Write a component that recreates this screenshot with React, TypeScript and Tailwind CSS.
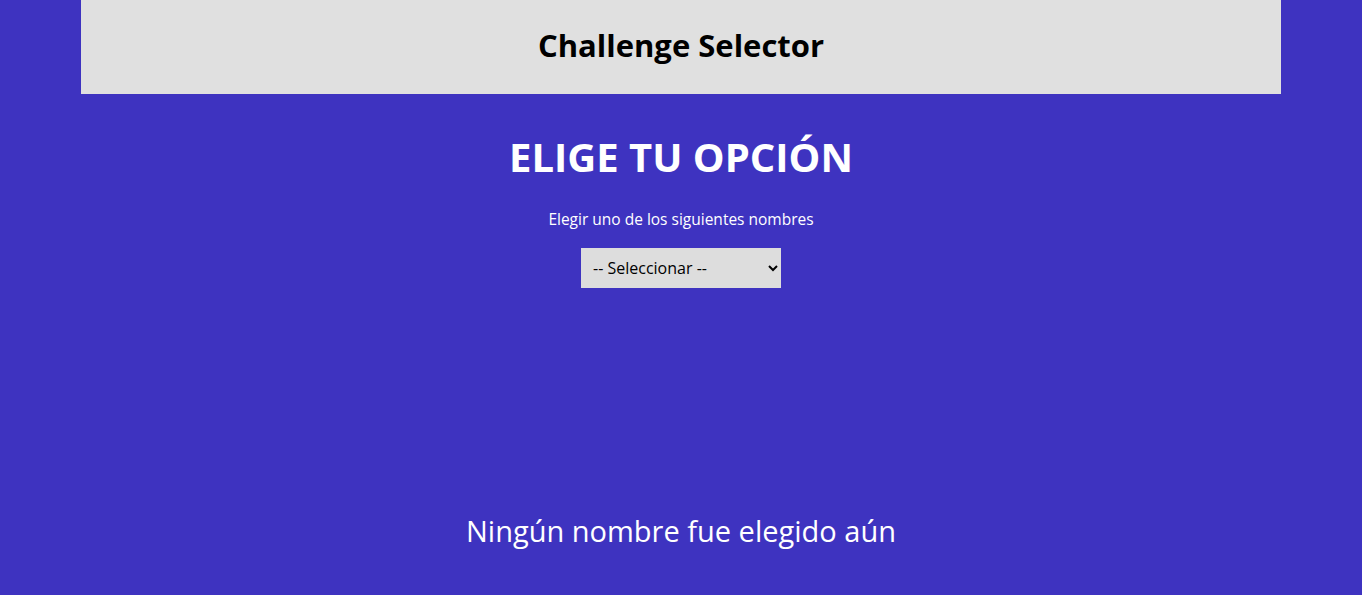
export default function App() {
    return (
        <div className="min-h-[595px] bg-[#3e33c0] font-['Open_Sans',sans-serif]">
            <header className="mx-auto flex h-[94px] w-[1200px] items-center justify-center bg-[#e0e0e0] pb-1">
                <h2 className="text-[31px] font-bold text-black">Challenge Selector</h2>
            </header>

            <main className="flex flex-col items-center text-white">
                <h1 className="mt-[35px] text-[40px] leading-[56px] font-bold">ELIGE TU OPCIÓN</h1>
                <p className="mt-[24px] text-[15.5px] leading-[20px]">Elegir uno de los siguientes nombres</p>
                <select className="mt-[19px] h-10 w-[200px] bg-[#dddddd] px-2 text-[16px] text-black outline-none">
                    <option>-- Seleccionar --</option>
                    <option>Ana</option>
                    <option>Luis</option>
                </select>

                <p className="mt-[223px] text-[29px] leading-[40px]">Ningún nombre fue elegido aún</p>
            </main>
        </div>
    );
}
